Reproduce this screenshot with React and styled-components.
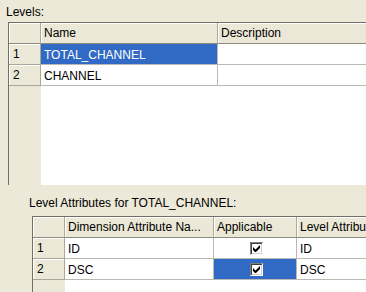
import React from 'react';
import styled, { createGlobalStyle } from 'styled-components';

const GlobalStyle = createGlobalStyle`
    html, body{
        margin:0;
        padding:0;
        overflow:hidden;
        background:#ece9d8;
    }
    body{
        font-family:"Liberation Sans", Arial, sans-serif;
        font-size:12px;
        color:#000;
    }
`

const levels = ['TOTAL_CHANNEL', 'CHANNEL'];

const attributes = [
    { name: 'ID', applicable: true, level: 'ID' },
    { name: 'DSC', applicable: true, level: 'DSC', selected: true },
];

function Check() {
    return (
        <CheckBox>
            <svg width="7" height="7" viewBox="0 0 7 7">
                <path d="M0 2v3l2 2h1l4-4V0L2.5 4.5z" fill="#000" />
            </svg>
        </CheckBox>
    )
}

function App() {
    return (
        <Page>
            <GlobalStyle />
            <Caption $indent={6}>Levels:</Caption>
            <Grid $x={8} $h={163} $cols="32px 177px 149px" $rows={levels.length}>
                <HeadCell $corner />
                <HeadCell>Name</HeadCell>
                <HeadCell>Description</HeadCell>
                {levels.map((lvl, i) => (
                    <React.Fragment key={lvl}>
                        <RowNum>{i + 1}</RowNum>
                        <Cell $selected={i === 0}>{lvl}</Cell>
                        <Cell />
                    </React.Fragment>
                ))}
                <FillerHead />
                <FillerBody />
            </Grid>

            <Caption $indent={29} $gap={11}>Level Attributes for TOTAL_CHANNEL:</Caption>
            <Grid $x={32} $h={76} $cols="32px 149px 83px 70px" $rows={attributes.length}>
                <HeadCell $corner />
                <HeadCell>Dimension Attribute Na...</HeadCell>
                <HeadCell>Applicable</HeadCell>
                <HeadCell>Level Attribu</HeadCell>
                {attributes.map((a, i) => (
                    <React.Fragment key={a.name}>
                        <RowNum>{i + 1}</RowNum>
                        <Cell>{a.name}</Cell>
                        <Cell $center $selected={a.selected}>{a.applicable && <Check />}</Cell>
                        <Cell>{a.level}</Cell>
                    </React.Fragment>
                ))}
                <FillerHead />
                <FillerBody />
            </Grid>
        </Page>
    )
}

const Page = styled.div`
    display:flex;
    flex-direction:column;
    align-items:flex-start;
    padding-top:5px;
    width:366px;
    height:292px;
    box-sizing:border-box;
    overflow:hidden;
`
const Caption = styled.div`
    line-height:14px;
    height:14px;
    padding-left:${p => p.$indent}px;
    margin-top:${p => p.$gap || 0}px;
    margin-bottom:${p => p.$gap ? 6 : 3}px;
    white-space:nowrap;
`
const Grid = styled.div`
    display:grid;
    flex:none;
    grid-template-columns:${p => p.$cols};
    grid-template-rows:repeat(${p => p.$rows + 1}, 21px) 1fr;
    height:${p => p.$h}px;
    margin-left:${p => p.$x}px;
    box-sizing:border-box;
    border-top:1px solid #716f64;
    border-left:1px solid #716f64;
    background:#fff;
`
const HeadCell = styled.div`
    box-sizing:border-box;
    background:#ebe8d7;
    border-right:1px solid #aca899;
    border-bottom:1px solid #8e8b7c;
    box-shadow:inset 1px 1px 0 #fff;
    padding-left:3px;
    line-height:20px;
    white-space:nowrap;
    overflow:hidden;
`
const RowNum = styled.div`
    box-sizing:border-box;
    background:#ebe8d7;
    border-right:1px solid #aca899;
    border-bottom:1px solid #aca899;
    box-shadow:inset 1px 1px 0 #fff;
    padding-left:4px;
    line-height:21px;
`
const Cell = styled.div`
    box-sizing:border-box;
    display:flex;
    align-items:center;
    justify-content:${p => p.$center ? 'center' : 'flex-start'};
    padding-left:${p => p.$center ? 0 : 3}px;
    padding-top:1px;
    border-right:1px solid #b9b9b4;
    border-bottom:1px solid #b9b9b4;
    background:${p => p.$selected ? '#316ac5' : '#fff'};
    color:${p => p.$selected ? '#fff' : '#000'};
    white-space:nowrap;
    overflow:hidden;
`
const FillerHead = styled.div`
    background:#ebe8d7;
`
const FillerBody = styled.div`
    grid-column:2 / -1;
    background:#fff;
`
const CheckBox = styled.span`
    box-sizing:border-box;
    width:13px;
    height:13px;
    display:flex;
    align-items:center;
    justify-content:center;
    background:#fff;
    border:1px solid;
    border-color:#808080 #fff #fff #808080;
    box-shadow:inset 1px 1px 0 #404040, inset -1px -1px 0 #d4d0c8;
    margin-left:2px;
`

export default App;
